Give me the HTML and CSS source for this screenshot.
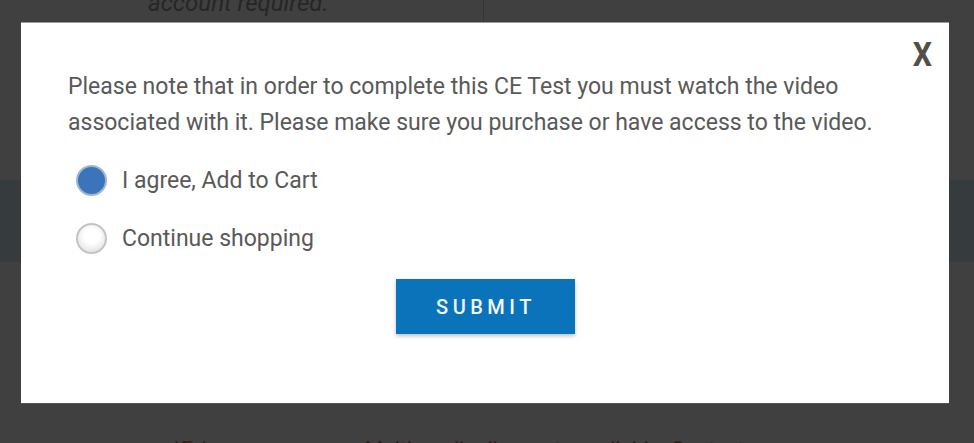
FILE: index.html
```html
<!DOCTYPE html>
<html>
<head>
<meta charset="utf-8">
<title>CE Test</title>
<link rel="stylesheet" href="styles.css">
</head>
<body>

<div class="page">
	<div class="page-top">
		<div class="col-left"><p class="note">account required.</p></div>
		<div class="col-right"></div>
	</div>
	<div class="page-band"></div>
	<div class="page-bottom">
		<p class="prices">*Prices are per user. Multi-media discounts available. Contact us</p>
	</div>
</div>

<div class="modal">
	<a class="modal-close" href="#">X</a>
	<p class="modal-text">Please note that in order to complete this CE Test you must watch the video associated with it. Please make sure you purchase or have access to the video.</p>
	<form class="modal-form">
		<label class="option">
			<input type="radio" name="choice" checked>
			<span class="radio"></span>
			<span>I agree, Add to Cart</span>
		</label>
		<label class="option">
			<input type="radio" name="choice">
			<span class="radio"></span>
			<span>Continue shopping</span>
		</label>
		<div class="actions">
			<button type="button" class="btn-submit">SUBMIT</button>
		</div>
	</form>
</div>

</body>
</html>
```

FILE: styles.css
```css
* {
	margin: 0;
	padding: 0;
	box-sizing: border-box;
}
html, body {
	height: 100%;
}
body {
	background: #404040;
	font-family: Roboto, "Liberation Sans", sans-serif;
	overflow: hidden;
}
.page-top {
	display: flex;
	height: 180px;
}
.col-left {
	width: 484px;
	border-right: 1px solid #353535;
	height: 22px;
}
.note {
	margin: -11px 0 0 148px;
	font-size: 24px;
	line-height: 28px;
	font-style: italic;
	color: #262626;
}
.page-band {
	height: 82px;
	background: #363b3e;
}
.page-bottom {
	padding-top: 175px;
}
.prices {
	padding-left: 172px;
	font-size: 21px;
	color: #2e1f1d;
	white-space: nowrap;
}

/* modal */
.modal {
	position: absolute;
	left: 21px;
	top: 22px;
	width: 928px;
	height: 382px;
	background: #fff;
	border-top: 1px solid #9a9a9a;
	border-bottom: 1px solid #5a5450;
	padding: 46px 47px 0;
	color: #555;
}
.modal-close {
	position: absolute;
	top: 12px;
	right: 16px;
	font-size: 33px;
	font-weight: bold;
	color: #524f4b;
	text-decoration: none;
	transform: scaleX(0.92);
}
.modal-text {
	font-size: 23px;
	line-height: 36px;
	color: #595959;
}
.modal-form {
	margin-top: 10px;
}
.option {
	display: flex;
	align-items: center;
	gap: 15px;
	height: 58px;
	margin-left: 8px;
	font-size: 23px;
	color: #595959;
	cursor: pointer;
}
.option input {
	display: none;
}
.radio {
	width: 31px;
	height: 31px;
	border-radius: 50%;
	border: 2px solid #c4c4c4;
	background: radial-gradient(circle at 50% 40%, #fff 35%, #d8d8d8 100%);
}
.option input:checked + .radio {
	border-color: #9fb6d2;
	background: #3a74bb;
}
.actions {
	display: flex;
	justify-content: center;
	margin-top: 12px;
}
.btn-submit {
	width: 179px;
	height: 55px;
	border: 0;
	background: #0a73ba;
	color: #f2f6fa;
	font-family: Roboto, "Liberation Sans", sans-serif;
	font-size: 20px;
	font-weight: 500;
	letter-spacing: 4.5px;
	padding-left: 2px;
	box-shadow: 0 2px 4px rgba(0,0,0,0.25);
	cursor: pointer;
}
```
